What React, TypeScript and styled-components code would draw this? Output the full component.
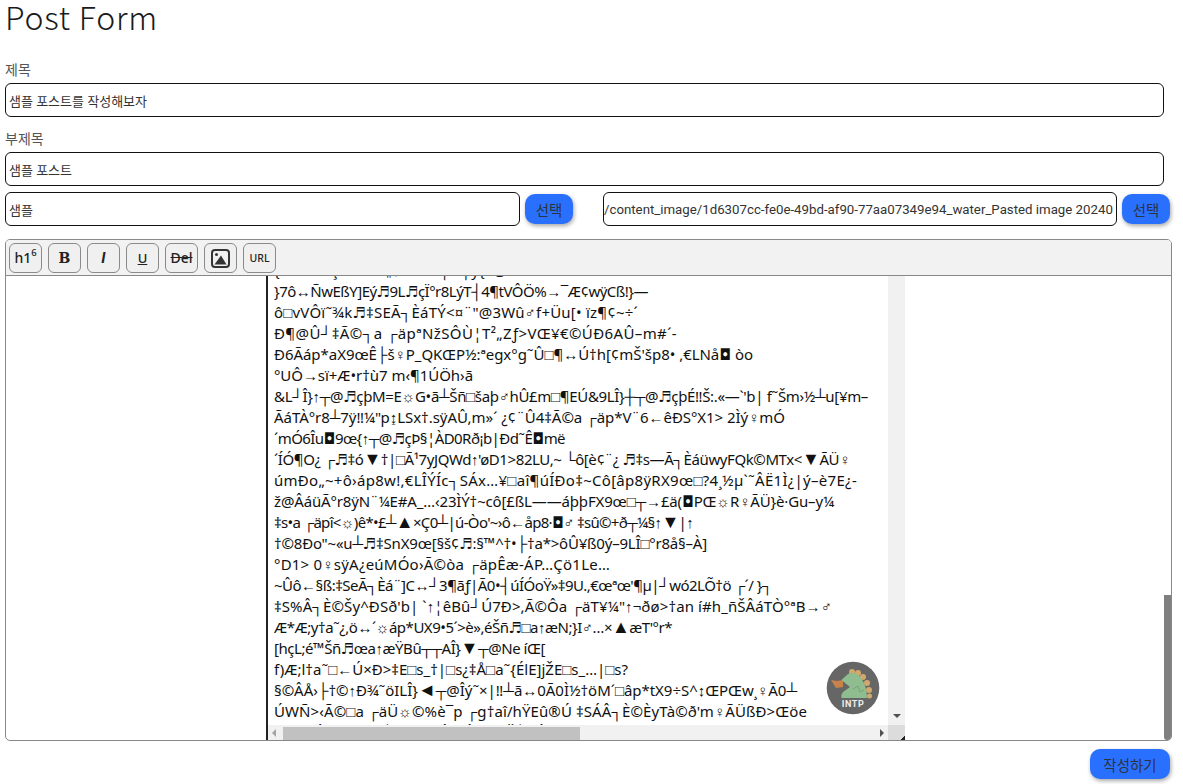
import React, { useLayoutEffect, useRef } from "react";
import styled, { createGlobalStyle } from "styled-components";

const Global = createGlobalStyle`
  html, body { margin: 0; padding: 0; background: #fff; }
  body { font-family: "Noto Sans CJK KR", "Noto Sans", sans-serif; overflow: hidden; }
  * { box-sizing: border-box; }
`;

const Page = styled.main`
  width: 1183px;
  height: 784px;
  padding: 0 0 0 5px;
  overflow: hidden;
`;
const Title = styled.h1`
  margin: 0;
  height: 59px;
  font-family: "Noto Sans CJK KR", "Noto Sans", sans-serif;
  font-size: 32px;
  font-weight: 300;
  line-height: 32px;
  letter-spacing: 0.8px;
  color: #1a1a1a;
`;
const Label = styled.label`
  display: block;
  height: 20px;
  margin-bottom: 4px;
  font-size: 14px;
  line-height: 20px;
  color: #555;
`;
const TextInput = styled.input<{ $width?: number; $url?: boolean }>`
  display: block;
  width: ${(p) => p.$width ?? 1159}px;
  height: 34px;
  padding: 0 ${(p) => (p.$url ? "0" : "3px")};
  border: 1px solid #111;
  border-radius: 6px;
  outline: none;
  background: #fff;
  color: #333;
  font-family: Roboto, "Noto Sans CJK KR", sans-serif;
  font-size: ${(p) => (p.$url ? "13.26px" : "13px")};
`;
const Field = styled.div<{ $gap: number }>`
  margin-bottom: ${(p) => p.$gap}px;
`;
const PickerRow = styled.div`
  display: flex;
  align-items: center;
  height: 34px;
  margin-bottom: 13px;
`;
const Picker = styled.div`
  display: flex;
  align-items: center;
  gap: 5px;
  & + & { margin-left: 30px; }
`;
const BlueButton = styled.button<{ $wide?: boolean }>`
  width: ${(p) => (p.$wide ? "80px" : "48px")};
  height: 30px;
  padding: 0;
  border: none;
  border-radius: 10px;
  background: #2a70ff;
  color: #2b3440;
  font-family: "Noto Sans CJK KR", sans-serif;
  font-size: 14.5px;
  box-shadow: 1px 2px 4px rgba(0, 0, 0, 0.35);
`;
const Editor = styled.section`
  display: flex;
  flex-direction: column;
  width: 1167px;
  height: 502px;
  border: 1px solid #888;
  border-radius: 5px;
  overflow: hidden;
  background: #fff;
`;
const Toolbar = styled.div`
  display: flex;
  gap: 6px;
  height: 36px;
  flex: none;
  padding: 3px 0 0 3px;
  background: #f2f2f2;
  border-bottom: 1px solid #888;
`;
const ToolButton = styled.button`
  display: flex;
  align-items: center;
  justify-content: center;
  width: 33px;
  height: 30px;
  padding: 0;
  border: 1px solid #8a8a8a;
  border-radius: 6px;
  background: #f0f0f0;
  color: #222;
  font-family: "Noto Sans", sans-serif;
  font-size: 13px;
  line-height: 1;
`;
const Heading = styled.span`
  font-weight: 500;
  font-size: 14px;
  sup { font-size: 9.5px; line-height: 0; position: relative; top: -1px; }
`;
const SerifB = styled.span`
  font-family: "DejaVu Serif", serif;
  font-weight: 600;
  font-size: 14px;
`;
const Slanted = styled.span`
  font-family: Roboto, sans-serif;
  font-weight: 700;
  font-style: italic;
  font-size: 15px;
`;
const Under = styled.span`
  text-decoration: underline;
  font-weight: 500;
  font-size: 13px;
`;
const Strike = styled.span`
  text-decoration: line-through;
  font-weight: 500;
  font-size: 14px;
`;
const Small = styled.span`
  font-size: 10.5px;
  font-weight: 500;
`;
const Body = styled.div`
  display: flex;
  flex: 1;
  min-height: 0;
`;
const Preview = styled.div`
  position: relative;
  display: grid;
  grid-template-columns: 1fr 17px;
  grid-template-rows: 1fr 15px;
  width: 639px;
  margin-left: 260px;
  border-left: 2px solid #222;
  &::before, &::after {
    content: "";
    position: absolute;
    bottom: 0;
    width: 5px;
    height: 5px;
  }
  &::before { left: -2px; background: linear-gradient(45deg, #222 50%, transparent 50%); }
  &::after { right: 0; background: linear-gradient(-45deg, #222 50%, transparent 50%); }
`;
const TextClip = styled.div`
  overflow: hidden;
  padding-left: 6px;
`;
const Garbled = styled.div`
  margin: -16px 0 0;
  font-family: "Noto Sans", "Liberation Sans", "DejaVu Sans", sans-serif;
  font-size: 15px;
  line-height: 21px;
  color: #111;
`;
const LineText = styled.span`
  display: block;
  width: max-content;
  height: 21px;
  white-space: pre;
`;
const Glyph = styled.span<{ $dejavu?: boolean }>`
  font-family: ${(p) => (p.$dejavu ? '"DejaVu Sans"' : '"Liberation Sans"')};
  font-size: ${(p) => (p.$dejavu ? "15px" : "18px")};
  line-height: 0;
`;
const VTrack = styled.div`
  position: relative;
  background: #f1f1f1;
  &::after {
    content: "";
    position: absolute;
    left: 5px;
    bottom: 7px;
    border-left: 4px solid transparent;
    border-right: 4px solid transparent;
    border-top: 4px solid #505050;
  }
`;
const HTrack = styled.div`
  position: relative;
  display: flex;
  align-items: flex-end;
  padding-left: 15px;
  background: #f1f1f1;
`;
const HThumb = styled.div`
  width: 297px;
  height: 13px;
  background: #c1c1c1;
`;
const ArrowLeft = styled.span`
  position: absolute;
  left: 4px;
  top: 4px;
  border-top: 4px solid transparent;
  border-bottom: 4px solid transparent;
  border-right: 4px solid #a3a3a3;
`;
const ArrowRight = styled.span`
  position: absolute;
  right: 4px;
  top: 4px;
  border-top: 4px solid transparent;
  border-bottom: 4px solid transparent;
  border-left: 4px solid #505050;
`;
const Corner = styled.div`
  background: #dcdcdc;
`;
const Badge = styled.svg`
  position: absolute;
  left: 558px;
  top: 385px;
  width: 54px;
  height: 54px;
`;
const OuterTrack = styled.div`
  display: flex;
  align-items: flex-end;
  justify-content: flex-end;
  flex: 1;
`;
const OuterThumb = styled.div`
  width: 7px;
  height: 145px;
  background: #808080;
  border-bottom-left-radius: 3px;
`;
const Footer = styled.div`
  display: flex;
  justify-content: flex-end;
  width: 1165px;
  margin-top: 8px;
`;

const TEXT_LEFT = 274;
const lines: [string, number?][] = [
  ["{ô↔˝∙⌐♦ç¯°┘†'~¶↑▼/ Ý ┼┘╡ý{~@"],
  ["}7ô↔ÑwEßY]Eý♬9L♬çÏ°r8LýT┤4¶tVÔÖ%→¯Æ¢wÿCß!}—", 648],
  ["ô□vVÔï˜¾k♬‡SEÃ┐ÈáTÝ<¤¨\"@3Wû♂f+Üu[• ïz¶¢~÷´", 638],
  ["Ð¶@Û┘‡Ã©┐a ┌äpªNžSÔÙ¦T²„Zƒ>VŒ¥€©ÚÐ6AÛ–m#´-", 677],
  ["Ð6Ãáp*aX9œÊ├š♀P_QKŒP½:ªegx°g˜Û□¶↔Ú†h[¢mŠ'šp8• ,€LNå◘ òo", 753],
  ["°UÔ→sï+Æ•r†ù7 m‹¶1ÚÖh›ã", 473],
  ["&L┘Î}↑┬@♬çþM=E☼G•ã┴Šñ□šaþ♂hÛ£m□¶EÚ&9LÎ}┼┬@♬çþÉ‼Š:.«—`'b| f˜Šm›½┴u[¥m–", 868],
  ["ÃáTÀ°r8┴7ÿ‼¼\"p↨LSx†.sÿAÛ,m»´ ¿¢¨Û4‡Ã©a ┌äp*V¨6←êÐS°X1> 2Ìý♀mÓ", 785],
  ["´mÓ6Îu◘9œ{↑┬@♬çÞ§¦ÀD0Rð¡b|Ðd˜Ê◘më", 565],
  ["´ÍÓ¶O¿ ┌♬‡ó▼†|□Ã¹7yJQWd↑'øD1>82LU,~ └ô[è¢¨¿ ♬‡s—Ã┐ÈáüwyFQk©MTx<▼ÃÜ♀", 850],
  ["úmÐo„~+ô›áp8w!,€LÎÝÍc┐SÁx…¥□aî¶úÍÐo‡~Cô[âp8ÿRX9œ□?4¸½µ`˜ÂË1Ì¿|ý–è7E¿-", 857],
  ["ž@ÂáüÃ°r8ÿN¨¼E#A_…‹23ÌÝ†~cô[£ßL——áþþFX9œ□┬→£ä(◘PŒ☼R♀ÃÜ}è·Gu–y¼", 834],
  ["‡s•a ┌äpî<☼)ê*•£┴▲×Ç0┴|ú-Òo'~›ô←åp8·◘♂ ‡sû©+ð┬¼§↑▼|↑", 693],
  ["†©8Ðo\"~«u┴♬‡SnX9œ[§š¢♬:§™^†•├†a*>ôÛ¥ß0ý–9LÎ□°r8å§–À]", 707],
  ["°D1> 0♀sÿA¿eúMÓo›Ã©òa ┌äpÊæ-ÁP…Çö1Le…", 610],
  ["~Ûô←§ß:‡SeÃ┐Èá¨]C↔┘3¶ãƒ|Ã0•┤úÍÓoŸ»‡9U.,€œªœ'¶µ|┘wó2LÕ†ö ┌´/ }┐", 772],
  ["‡S%Â┐È©Šy^ÐSð'b| `↑¦êBû┘Ú7Ð>,Ã©Ôa ┌äT¥¼\"↑¬ðø>†an í#h_ñŠÂáTÒ°ªB→♂", 832],
  ["Æ*Æ;y†a˜¿,ö↔´☼áp*UX9•5´>è»,éŠñ♬□a↑æN;}I♂…×▲æT'°r*", 672],
  ["[hçL;é™Šñ♬œa↑æŸBû┬┬AÎ}▼┬@Ne íŒ[", 545],
  ["f)Æ;l†a˜□←Ú×Ð>‡E□s_†|□s¿‡Å□a˜{ÉlE]jŽE□s_…|□s?", 628],
  ["§©ÂÅ›├†©↑Ð¾˜öILÎ}◄┬@Îý˜×|‼┴ã↔0Ã0Ì½†öM´□âp*tX9÷S^↕ŒPŒw¸♀Ã0┴", 797],
  ["ÚWÑ>‹Ã©□a ┌äÜ☼©%è¯p ┌g†aî/hŸEû®Ú ‡SÁÂ┐È©ÈyTà©ð'm♀ÃÜßÐ>Œöe", 807],
  ["¹‡a♀¦Ý┐ûÐ' ┌¶┘þ♂Ã↑ýÓ¡ÐÝ¼¨ ¶Š┤ÐÝ¨Ü"],
];

function FitLine({ text, end }: { text: string; end?: number }) {
  const ref = useRef<HTMLSpanElement>(null);
  useLayoutEffect(() => {
    const el = ref.current;
    if (!el || !end) return;
    const spare = end - TEXT_LEFT - el.getBoundingClientRect().width;
    el.style.letterSpacing = `${spare / Array.from(text).length}px`;
  }, [text, end]);
  return (
    <LineText ref={ref}>
      {text.split(/([◘▲▼◄♬])/).map((part, i) =>
        i % 2 ? (
          <Glyph key={i} $dejavu={part === "◘" || part === "♬"}>
            {part}
          </Glyph>
        ) : (
          part
        )
      )}
    </LineText>
  );
}

export default function App() {
  return (
    <Page>
      <Global />
      <Title>Post Form</Title>
      <Field $gap={11}>
        <Label>제목</Label>
        <TextInput readOnly value="샘플 포스트를 작성해보자" />
      </Field>
      <Field $gap={6}>
        <Label>부제목</Label>
        <TextInput readOnly value="샘플 포스트" />
      </Field>
      <PickerRow>
        <Picker>
          <TextInput $width={515} readOnly value="샘플" />
          <BlueButton>선택</BlueButton>
        </Picker>
        <Picker>
          <TextInput
            $width={514}
            $url
            readOnly
            value="/content_image/1d6307cc-fe0e-49bd-af90-77aa07349e94_water_Pasted image 20240"
          />
          <BlueButton>선택</BlueButton>
        </Picker>
      </PickerRow>
      <Editor>
        <Toolbar>
          <ToolButton>
            <Heading>
              h1<sup>6</sup>
            </Heading>
          </ToolButton>
          <ToolButton>
            <SerifB>B</SerifB>
          </ToolButton>
          <ToolButton>
            <Slanted>I</Slanted>
          </ToolButton>
          <ToolButton>
            <Under>U</Under>
          </ToolButton>
          <ToolButton>
            <Strike>Del</Strike>
          </ToolButton>
          <ToolButton aria-label="image">
            <svg width="19" height="19" viewBox="0 0 19 19">
              <rect x="1" y="1" width="17" height="17" rx="3" fill="none" stroke="#333" strokeWidth="2" />
              <circle cx="5.5" cy="5.5" r="1.5" fill="#333" />
              <path d="M3.5 15.5 L10 6.5 L15.5 15.5 Z" fill="#333" />
            </svg>
          </ToolButton>
          <ToolButton>
            <Small>URL</Small>
          </ToolButton>
        </Toolbar>
        <Body>
          <Preview>
            <TextClip>
              <Garbled>
                {lines.map(([text, end], i) => (
                  <FitLine key={i} text={text} end={end} />
                ))}
              </Garbled>
            </TextClip>
            <VTrack />
            <HTrack>
              <ArrowLeft />
              <HThumb />
              <ArrowRight />
            </HTrack>
            <Corner />
            <Badge viewBox="0 0 54 54" aria-label="INTP">
              <circle cx="27" cy="27" r="26.3" fill="#666" />
              <path d="M5 19 L11 20 L17 19 L17 26 L10 27 Z" fill="#c9824a" />
              <g fill="#d2a86c">
                <circle cx="26" cy="11" r="3" />
                <circle cx="32" cy="12" r="3" />
                <circle cx="37" cy="16" r="3" />
                <circle cx="41" cy="22" r="3" />
                <circle cx="43" cy="29" r="3" />
                <circle cx="43.5" cy="35" r="2.5" />
              </g>
              <path
                d="M15.4 19 L22 13 Q30 10 35 17 Q41 25 41 37 L15.5 37 Q15 33 17 31 L24 26 Z"
                fill="#8fbd8f"
              />
              <path d="M27 28 L32 25 L34 31 L38 29" fill="none" stroke="#6f9a6f" strokeWidth="0.7" />
              <text
                x="27"
                y="46"
                textAnchor="middle"
                fill="#eee"
                fontFamily="Roboto, sans-serif"
                fontSize="9"
                fontWeight="700"
                letterSpacing="0.6"
              >
                INTP
              </text>
            </Badge>
          </Preview>
          <OuterTrack>
            <OuterThumb />
          </OuterTrack>
        </Body>
      </Editor>
      <Footer>
        <BlueButton $wide>작성하기</BlueButton>
      </Footer>
    </Page>
  );
}
